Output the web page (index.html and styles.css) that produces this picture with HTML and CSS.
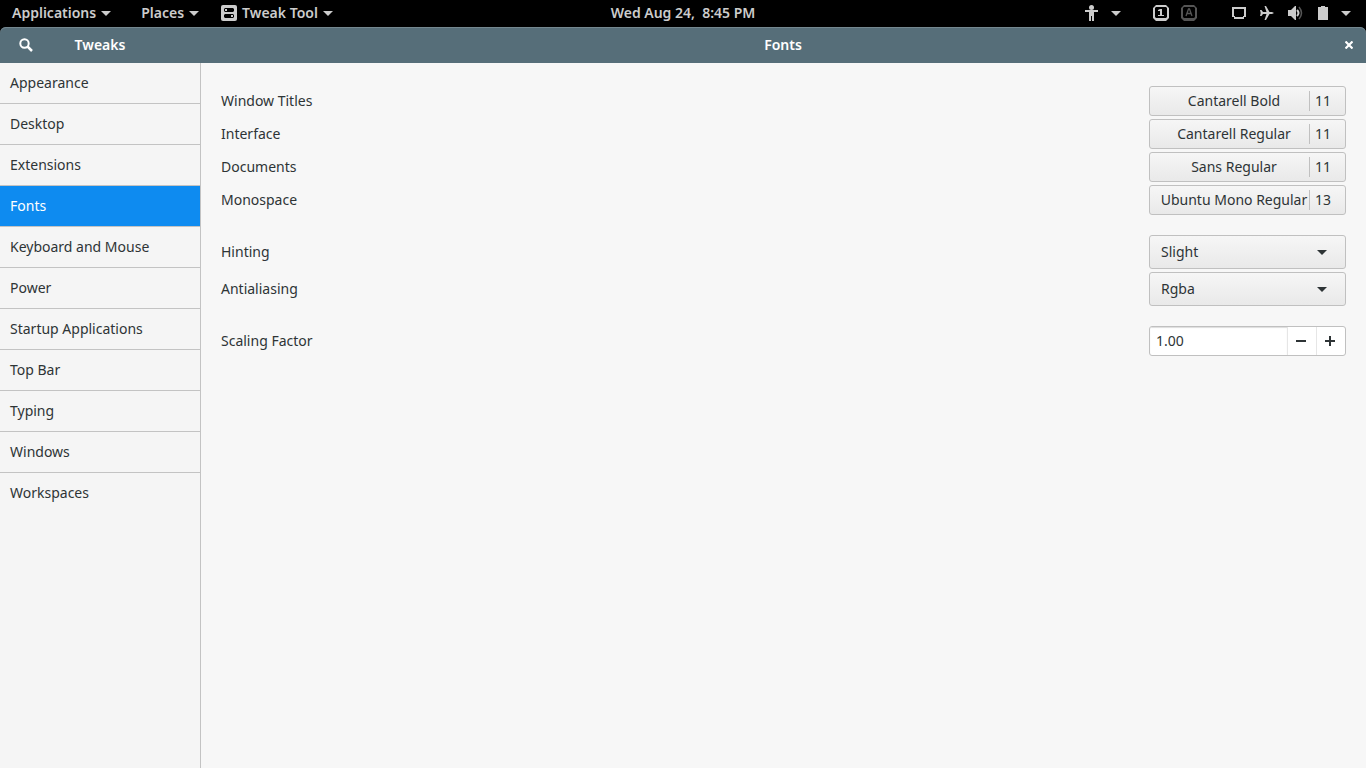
FILE: index.html
```html
<!DOCTYPE html>
<html lang="en">
<head>
<meta charset="utf-8">
<title>Tweaks</title>
<link rel="stylesheet" href="styles.css">
</head>
<body>
<svg class="symbols" aria-hidden="true">
  <symbol id="arrow" viewBox="0 0 10 5"><path d="M0 0h10L5 5z" fill="currentColor"/></symbol>
</svg>
<header class="topbar">
  <nav class="menus">
    <button class="menu">Applications<svg class="arrow"><use href="#arrow"/></svg></button>
    <button class="menu">Places<svg class="arrow"><use href="#arrow"/></svg></button>
    <button class="menu app-menu">
      <svg class="icon" viewBox="0 0 16 16"><rect width="16" height="16" rx="2" fill="currentColor"/><path d="M4 3h8l1 1v2l-1 1H4L3 6V4zM4 9h8l1 1v2l-1 1H4l-1-1v-2z" fill="#000"/><path d="M4 4h2v2H4zM10 10h2v2h-2z" fill="currentColor"/></svg>
      <span class="app-name">Tweak Tool</span><svg class="arrow"><use href="#arrow"/></svg>
    </button>
  </nav>
  <button class="clock">Wed Aug 24,&nbsp; 8:45 PM</button>
  <div class="status">
    <button class="status-group" aria-label="Accessibility">
      <svg class="icon" viewBox="0 0 16 16"><circle cx="6.500" cy="2.500" r="2.500" fill="currentColor"/><path d="M0 5h13v2H9v9H7v-5H6v5H4V7H0z" fill="currentColor"/></svg>
      <svg class="arrow"><use href="#arrow"/></svg>
    </button>
    <div class="status-group locks">
      <svg class="icon" viewBox="0 0 16 16"><path fill-rule="evenodd" d="M3 0h10l3 3v10l-3 3H3l-3-3V3zM3 2L2 3v9l1 1h10l1-1V3l-1-1z" fill="currentColor"/><path d="M5 10h6v1H5zM7 4h2v6H7V6H5V5z" fill="currentColor"/></svg>
      <svg class="icon dim" viewBox="0 0 16 16"><path fill-rule="evenodd" d="M3 0h10l3 3v10l-3 3H3l-3-3V3zM3 2L2 3v9l1 1h10l1-1V3l-1-1z" fill="currentColor"/><path d="M5 11l2.500-7h1L11 11M6 8.500h4" fill="none" stroke="currentColor" stroke-width="1.300"/></svg>
    </div>
    <button class="status-group system" aria-label="System">
      <svg class="icon" viewBox="0 0 16 16"><path fill-rule="evenodd" d="M1 2h14v10h-2v2H3v-2H1zM3 4v7h1v1h8v-1h1V4z" fill="currentColor"/></svg>
      <svg class="icon" viewBox="0 0 16 16"><path d="M5.500 1H7l3.500 6H13l2 1-2 1h-2.500L7 15H5.500L7.500 9H4l-1.500 2H1l.700-3L1 5h1.500L4 7h3.500z" fill="currentColor"/></svg>
      <svg class="icon" viewBox="0 0 16 16"><path d="M1 5h3l4-4h1v14H8l-4-4H1z" fill="currentColor"/><path d="M10 5q3 3 0 6" fill="none" stroke="currentColor" stroke-width="2"/><path d="M12 2q5 6 0 12" fill="none" stroke="#555" stroke-width="1.500"/></svg>
      <svg class="icon" viewBox="0 0 16 16"><path d="M6 1h4v1h3v13H3V2h3z" fill="currentColor"/></svg>
      <svg class="arrow"><use href="#arrow"/></svg>
    </button>
  </div>
</header>
<section class="window">
  <header class="titlebar">
    <div class="title-left">
      <button class="search" aria-label="Search"><svg class="icon" viewBox="0 0 16 16"><circle cx="6.500" cy="6.500" r="4.200" fill="none" stroke="currentColor" stroke-width="2"/><path d="M9.500 9.500l4.500 4.500" stroke="currentColor" stroke-width="2.500"/></svg></button>
      <h1 class="title">Tweaks</h1>
    </div>
    <div class="title-right">
      <h2 class="title">Fonts</h2>
      <button class="close" aria-label="Close"><svg class="close-icon" viewBox="0 0 8 8"><path d="M0.500 0.500l7 7M7.500 0.500l-7 7" stroke="currentColor" stroke-width="2.200"/></svg></button>
    </div>
  </header>
  <div class="content">
    <nav class="sidebar">
      <a class="item" href="#appearance">Appearance</a>
      <a class="item" href="#desktop">Desktop</a>
      <a class="item" href="#extensions">Extensions</a>
      <a class="item selected" href="#fonts" aria-current="page">Fonts</a>
      <a class="item" href="#keyboard">Keyboard and Mouse</a>
      <a class="item" href="#power">Power</a>
      <a class="item" href="#startup">Startup Applications</a>
      <a class="item" href="#topbar">Top Bar</a>
      <a class="item" href="#typing">Typing</a>
      <a class="item" href="#windows">Windows</a>
      <a class="item" href="#workspaces">Workspaces</a>
    </nav>
    <main class="settings">
      <div class="group">
        <div class="row"><label for="f-titles">Window Titles</label><button class="control font-button" id="f-titles"><span class="font-name">Cantarell Bold</span><span class="font-size">11</span></button></div>
        <div class="row"><label for="f-interface">Interface</label><button class="control font-button" id="f-interface"><span class="font-name">Cantarell Regular</span><span class="font-size">11</span></button></div>
        <div class="row"><label for="f-documents">Documents</label><button class="control font-button" id="f-documents"><span class="font-name">Sans Regular</span><span class="font-size">11</span></button></div>
        <div class="row"><label for="f-mono">Monospace</label><button class="control font-button" id="f-mono"><span class="font-name">Ubuntu Mono Regular</span><span class="font-size">13</span></button></div>
      </div>
      <div class="group">
        <div class="row"><label for="hinting">Hinting</label><div class="combo"><select class="control" id="hinting"><option>None</option><option selected>Slight</option><option>Medium</option><option>Full</option></select><svg class="arrow"><use href="#arrow"/></svg></div></div>
        <div class="row"><label for="antialiasing">Antialiasing</label><div class="combo"><select class="control" id="antialiasing"><option>None</option><option>Grayscale</option><option selected>Rgba</option></select><svg class="arrow"><use href="#arrow"/></svg></div></div>
      </div>
      <div class="group">
        <div class="row"><label for="scaling">Scaling Factor</label>
          <div class="spin"><input id="scaling" type="text" value="1.00"><button class="step" aria-label="Decrease"><svg class="step-icon" viewBox="0 0 10 10"><path d="M0 4h10v2H0z" fill="currentColor"/></svg></button><button class="step" aria-label="Increase"><svg class="step-icon" viewBox="0 0 10 10"><path d="M0 4h4V0h2v4h4v2H6v4H4V6H0z" fill="currentColor"/></svg></button></div>
        </div>
      </div>
    </main>
  </div>
</section>
</body>
</html>
```
FILE: styles.css
```css
* { box-sizing: border-box; }
body {
  margin: 0;
  min-height: 100vh;
  display: flex;
  flex-direction: column;
  background: #000;
  color: #2e3436;
  font: 14px/20px "Noto Sans", "Open Sans", sans-serif;
}
button, input, select {
  margin: 0;
  padding: 0;
  border: 0;
  background: none;
  color: inherit;
  font: inherit;
}
svg { display: block; flex: none; }
.symbols { position: absolute; width: 0; height: 0; }
.icon { width: 16px; height: 16px; }
.arrow { width: 10px; height: 5px; }

.topbar {
  height: 27px;
  padding-bottom: 1px;
  display: grid;
  grid-template-columns: 1fr auto 1fr;
  align-items: center;
  color: #ccc;
  font-weight: 600;
}
.menus { display: flex; gap: 30px; padding-left: 12px; }
.menu { display: flex; align-items: center; gap: 5px; }
.app-menu { margin-left: -8px; }
.status { display: flex; justify-content: flex-end; gap: 32px; padding-right: 15px; }
.status-group { display: flex; align-items: center; gap: 12px; }
.status-group .arrow { margin-left: -2px; }
.locks { margin-right: 2px; }
.dim { color: #555; }

.window {
  flex: 1;
  display: flex;
  flex-direction: column;
}
.titlebar {
  height: 36px;
  display: flex;
  border-radius: 6px 6px 0 0;
  background: #566e79;
  box-shadow: inset 0 1px #74878f;
  color: #fff;
}
.title { grid-column: 2; margin: 0; font-size: 14px; font-weight: 600; line-height: 20px; }
.title-left, .title-right {
  display: grid;
  grid-template-columns: 1fr auto 1fr;
  align-items: center;
}
.title-left { width: 200px; }
.title-right { flex: 1; }
.search { justify-self: start; margin-left: 18px; }
.close { grid-column: 3; justify-self: end; margin-right: 13px; }
.close-icon { width: 8px; height: 8px; }

.content { flex: 1; display: flex; background: #f7f7f7; }
.sidebar {
  width: 201px;
  border-right: 1px solid #c3c3c3;
  background: #f5f5f5;
}
.item {
  display: block;
  padding: 10px;
  border-bottom: 1px solid #c3c3c3;
  color: inherit;
  text-decoration: none;
}
.item:last-child { border-bottom: 0; }
.selected { background: #0e8bf0; color: #fff; }

.settings {
  flex: 1;
  display: flex;
  flex-direction: column;
  gap: 20px;
  padding: 23px 20px;
}
.group { display: flex; flex-direction: column; gap: 3px; }
.row { display: flex; align-items: center; justify-content: space-between; }
.control {
  width: 197px;
  border: 1px solid #c0c0c0;
  border-radius: 3px;
  background: linear-gradient(#f6f6f6, #e9e9e9);
}
.font-button { height: 30px; display: flex; align-items: center; }
.font-name { flex: 1; padding-left: 9px; white-space: nowrap; text-align: center; }
.font-size {
  width: 36px;
  padding-left: 5px;
  border-left: 1px solid #c0c0c0;
  text-align: left;
}
.combo { display: grid; align-items: center; }
.combo > * { grid-area: 1 / 1; }
.combo select { height: 34px; padding: 0 11px; appearance: none; }
.combo .arrow { justify-self: end; margin-right: 19px; pointer-events: none; }
.spin {
  width: 197px;
  height: 30px;
  display: flex;
  border: 1px solid #c0c0c0;
  border-radius: 3px;
  background: #fff;
  overflow: hidden;
}
.spin input { flex: 1; min-width: 0; padding: 0 6px; box-shadow: inset 0 1px 1px #ddd; }
.step {
  width: 29px;
  padding-right: 2px;
  display: grid;
  place-items: center;
  border-left: 1px solid #e6e6e6;
}
.step-icon { width: 10px; height: 10px; }
```
